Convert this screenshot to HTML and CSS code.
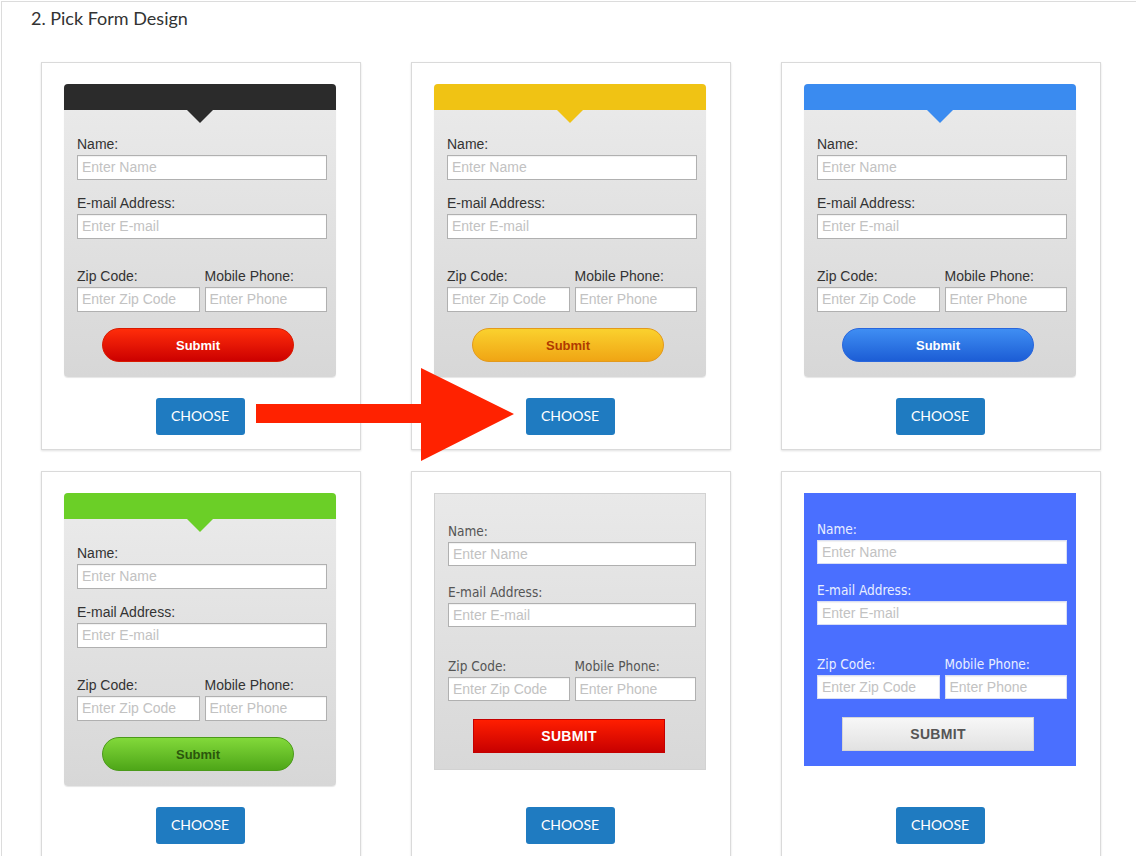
FILE: index.html
```html
<!DOCTYPE html>
<html lang="en">

<head>
    <meta charset="UTF-8" />
    <meta name="viewport" content="width=device-width, initial-scale=1.0" />
    <title>Pick Form Design</title>
    <link rel="stylesheet" href="styles.css">
</head>

<body>
    <div class="page">
        <h2 class="step-title">2. Pick Form Design</h2>

        <div class="design-grid">
            <!-- Design 1: dark tab -->
            <div class="design-card">
                <div class="preview preview-tab tab-dark">
                    <div class="tab"></div>
                    <div class="fields">
                        <label>Name:</label>
                        <input type="text" placeholder="Enter Name">
                        <label class="gap">E-mail Address:</label>
                        <input type="text" placeholder="Enter E-mail">
                        <div class="pair">
                            <div class="col"><label>Zip Code:</label><input type="text" placeholder="Enter Zip Code"></div>
                            <div class="col"><label>Mobile Phone:</label><input type="text" placeholder="Enter Phone"></div>
                        </div>
                        <button class="submit pill pill-red">Submit</button>
                    </div>
                </div>
                <button class="choose">CHOOSE</button>
            </div>

            <!-- Design 2: yellow tab -->
            <div class="design-card">
                <div class="preview preview-tab tab-yellow">
                    <div class="tab"></div>
                    <div class="fields">
                        <label>Name:</label>
                        <input type="text" placeholder="Enter Name">
                        <label class="gap">E-mail Address:</label>
                        <input type="text" placeholder="Enter E-mail">
                        <div class="pair">
                            <div class="col"><label>Zip Code:</label><input type="text" placeholder="Enter Zip Code"></div>
                            <div class="col"><label>Mobile Phone:</label><input type="text" placeholder="Enter Phone"></div>
                        </div>
                        <button class="submit pill pill-yellow">Submit</button>
                    </div>
                </div>
                <button class="choose">CHOOSE</button>
            </div>

            <!-- Design 3: blue tab -->
            <div class="design-card">
                <div class="preview preview-tab tab-blue">
                    <div class="tab"></div>
                    <div class="fields">
                        <label>Name:</label>
                        <input type="text" placeholder="Enter Name">
                        <label class="gap">E-mail Address:</label>
                        <input type="text" placeholder="Enter E-mail">
                        <div class="pair">
                            <div class="col"><label>Zip Code:</label><input type="text" placeholder="Enter Zip Code"></div>
                            <div class="col"><label>Mobile Phone:</label><input type="text" placeholder="Enter Phone"></div>
                        </div>
                        <button class="submit pill pill-blue">Submit</button>
                    </div>
                </div>
                <button class="choose">CHOOSE</button>
            </div>

            <!-- Design 4: green tab -->
            <div class="design-card">
                <div class="preview preview-tab tab-green">
                    <div class="tab"></div>
                    <div class="fields">
                        <label>Name:</label>
                        <input type="text" placeholder="Enter Name">
                        <label class="gap">E-mail Address:</label>
                        <input type="text" placeholder="Enter E-mail">
                        <div class="pair">
                            <div class="col"><label>Zip Code:</label><input type="text" placeholder="Enter Zip Code"></div>
                            <div class="col"><label>Mobile Phone:</label><input type="text" placeholder="Enter Phone"></div>
                        </div>
                        <button class="submit pill pill-green">Submit</button>
                    </div>
                </div>
                <button class="choose">CHOOSE</button>
            </div>

            <!-- Design 5: flat grey -->
            <div class="design-card">
                <div class="preview preview-flat flat-grey">
                    <div class="fields">
                        <label>Name:</label>
                        <input type="text" placeholder="Enter Name">
                        <label class="gap">E-mail Address:</label>
                        <input type="text" placeholder="Enter E-mail">
                        <div class="pair">
                            <div class="col"><label>Zip Code:</label><input type="text" placeholder="Enter Zip Code"></div>
                            <div class="col"><label>Mobile Phone:</label><input type="text" placeholder="Enter Phone"></div>
                        </div>
                        <button class="submit block block-red">SUBMIT</button>
                    </div>
                </div>
                <button class="choose">CHOOSE</button>
            </div>

            <!-- Design 6: flat blue -->
            <div class="design-card">
                <div class="preview preview-flat flat-blue">
                    <div class="fields">
                        <label>Name:</label>
                        <input type="text" placeholder="Enter Name">
                        <label class="gap">E-mail Address:</label>
                        <input type="text" placeholder="Enter E-mail">
                        <div class="pair">
                            <div class="col"><label>Zip Code:</label><input type="text" placeholder="Enter Zip Code"></div>
                            <div class="col"><label>Mobile Phone:</label><input type="text" placeholder="Enter Phone"></div>
                        </div>
                        <button class="submit block block-light">SUBMIT</button>
                    </div>
                </div>
                <button class="choose">CHOOSE</button>
            </div>
        </div>

        <!-- Annotation arrow over the first row -->
        <svg class="arrow" width="258" height="93" viewBox="0 0 258 93">
            <path d="M0 36 H165 V0 L258 46 L165 93 V55 H0 Z" fill="#ff2200" />
        </svg>
    </div>
</body>

</html>
```

FILE: styles.css
```css
* {
    margin: 0;
    padding: 0;
    box-sizing: border-box;
}

body {
    background-color: #fff;
    color: #333;
    font-family: "Lato", sans-serif;
}

.page {
    position: relative;
    margin: 1px 0 0 1px;
    border-top: 1px solid #dcdcdc;
    border-left: 1px solid #dcdcdc;
    min-height: 860px;
}

.step-title {
    padding: 6px 0 0 29px;
    font-size: 18px;
    font-weight: 400;
    line-height: 20px;
    color: #333;
}

/* Design cards */

.design-grid {
    display: grid;
    grid-template-columns: repeat(3, 320px);
    column-gap: 50px;
    row-gap: 21px;
    margin: 34px 0 0 39px;
}

.design-card {
    display: flex;
    flex-direction: column;
    align-items: flex-start;
    background: #fff;
    border: 1px solid #dadada;
    box-shadow: 0 1px 2px rgba(0, 0, 0, 0.12);
    padding: 21px 24px 14px 22px;
}

.choose {
    align-self: center;
    margin-top: auto;
    width: 89px;
    height: 37px;
    padding-bottom: 3px;
    border: none;
    border-radius: 3px;
    background-color: #1f7bc1;
    color: #fff;
    font-family: "Lato", sans-serif;
    font-size: 14px;
    cursor: pointer;
}

/* Form previews */

.preview {
    position: relative;
    width: 272px;
    margin-bottom: 21px;
    font-family: "Liberation Sans", Arial, sans-serif;
}

.preview .fields {
    display: flex;
    flex-direction: column;
    padding: 0 9px 15px 13px;
}

.preview label {
    display: block;
    font-size: 14px;
    line-height: 17px;
    margin-bottom: 2px;
    color: #333;
}

.preview input {
    width: 100%;
    height: 25px;
    padding: 0 4px 1px;
    border: 1px solid #b0b0b0;
    box-shadow: inset 0 1px 1px rgba(0, 0, 0, 0.06);
    background: #fff;
    font-family: "Liberation Sans", Arial, sans-serif;
    font-size: 14px;
    color: #333;
}

.preview input::placeholder {
    color: #c2c2c2;
}

.pair {
    display: flex;
    gap: 5px;
    margin-top: 29px;
}

.pair .col {
    flex: 1;
}

.submit {
    align-self: flex-start;
    margin-left: 25px;
    width: 192px;
    font-family: "Liberation Sans", Arial, sans-serif;
    font-weight: 700;
    cursor: pointer;
}

/* Tab style */

.preview-tab {
    border-radius: 4px;
    background: linear-gradient(#ebebeb, #d7d7d7);
    box-shadow: 0 1px 1px rgba(0, 0, 0, 0.1);
}

.preview-tab .tab {
    position: relative;
    height: 26px;
    border-radius: 4px 4px 0 0;
}

.preview-tab .tab::after {
    content: "";
    position: absolute;
    left: 50%;
    top: 26px;
    margin-left: -13px;
    border-left: 13px solid transparent;
    border-right: 13px solid transparent;
    border-top: 13px solid;
    border-top-color: inherit;
}

.preview-tab .fields {
    padding-top: 26px;
}

.preview-tab label.gap {
    margin-top: 15px;
}

.tab-dark .tab {
    background: #2b2b2b;
    border-top-color: #2b2b2b;
}

.tab-yellow .tab {
    background: #f0c314;
    border-top-color: #f0c314;
}

.tab-blue .tab {
    background: #3a8bf0;
    border-top-color: #3a8bf0;
}

.tab-green .tab {
    background: #6bcf27;
    border-top-color: #6bcf27;
}

.pill {
    height: 34px;
    margin-top: 16px;
    border-radius: 17px;
    font-size: 13px;
}

.pill-red {
    background: linear-gradient(#ff2d0a, #cc0000);
    border: 1px solid #d81a00;
    color: #fff;
}

.pill-yellow {
    background: linear-gradient(#fad12e, #f0a514);
    border: 1px solid #e39a1c;
    color: #b03a00;
}

.pill-blue {
    background: linear-gradient(#3f8ef3, #1c5dd5);
    border: 1px solid #2866dd;
    color: #fff;
}

.pill-green {
    background: linear-gradient(#82d93a, #4ea618);
    border: 1px solid #4b9a1a;
    color: #2b560c;
}

/* Flat style */

.preview-flat .fields {
    padding: 28px 9px 15px 13px;
}

.preview-flat label {
    font-family: "DejaVu Sans Condensed", "DejaVu Sans", sans-serif;
    font-size: 13.5px;
    margin-bottom: 2px;
}

.preview-flat input {
    height: 24px;
}

.preview-flat label.gap {
    margin-top: 18px;
}

.preview-flat .pair {
    margin-top: 31px;
}

.flat-grey {
    background: linear-gradient(#e9e9e9, #d8d8d8);
    border: 1px solid #d2d2d2;
}

.flat-grey .fields {
    padding-top: 29px;
    padding-bottom: 16px;
}

.flat-grey label {
    color: #555;
}

.flat-blue {
    background: #4a6fff;
}

.flat-blue label {
    color: #e8eeff;
}

.flat-blue input {
    border-color: #d8def5;
}

.block {
    height: 34px;
    margin-top: 18px;
    font-size: 14px;
    letter-spacing: 0.3px;
}

.block-red {
    background: linear-gradient(#ff1e00, #c80000);
    border: 1px solid #c40000;
    color: #fff;
}

.block-light {
    background: linear-gradient(#f7f7f7, #e2e2e2);
    border: 1px solid #d6d6d6;
    color: #555;
}

/* Arrow annotation */

.arrow {
    position: absolute;
    left: 254px;
    top: 366px;
}
```
